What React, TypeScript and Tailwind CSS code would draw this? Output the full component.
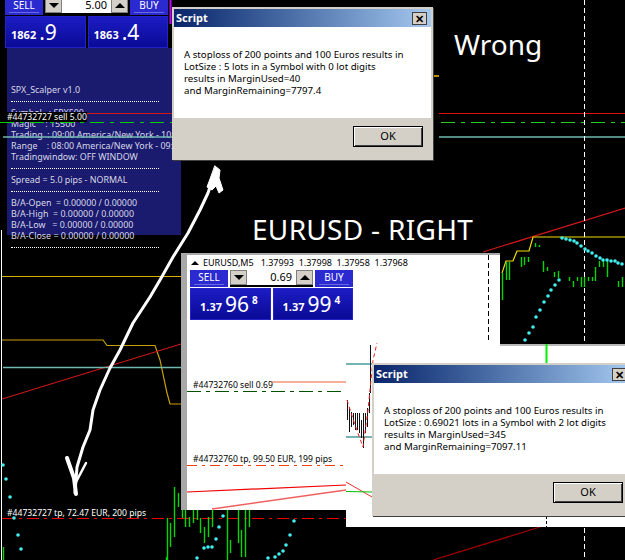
const uiFont = { fontFamily: '"Noto Sans", sans-serif' };

const candleDots = [
  [525, 340], [529, 333], [533, 327], [536, 317], [540, 310], [544, 302], [548, 296], [551, 290], [555, 285], [559, 280],
  [562, 238], [566, 239], [570, 240], [574, 241], [577, 243], [581, 246], [585, 249], [588, 251], [592, 253], [596, 256],
  [600, 258], [603, 260], [607, 260], [611, 261], [615, 261], [618, 263], [622, 264],
  [3, 465], [6, 479], [10, 497], [14, 518], [18, 535], [21, 549],
  [197, 558], [204, 548], [208, 547], [212, 547], [216, 539], [219, 527], [223, 516],
  [268, 558], [275, 557], [279, 554], [283, 551], [286, 545], [290, 535], [294, 521],
];

// x, top, bottom
const greenSticks = [
  [502, 273, 300], [506, 262, 280], [509, 262, 280], [521, 257, 267], [524, 257, 265], [528, 257, 262], [535, 243, 247],
  [539, 245, 247], [543, 261, 272], [547, 267, 271], [554, 272, 277], [558, 271, 278], [569, 277, 281], [573, 281, 287],
  [577, 277, 281], [581, 277, 287], [584, 277, 287], [588, 277, 281], [592, 277, 281], [595, 267, 281], [599, 261, 267],
  [603, 261, 267], [607, 261, 277], [618, 281, 287], [622, 277, 287],
  [3, 547, 560], [166, 557, 560], [167, 518, 560], [170, 523, 547], [174, 487, 537], [178, 493, 507],
  [182, 509, 518], [185, 509, 527], [189, 517, 527], [193, 509, 523], [197, 509, 520], [200, 518, 533], [204, 527, 543],
  [208, 517, 537], [212, 509, 527], [227, 509, 560], [230, 540, 553], [238, 509, 543], [241, 530, 557], [245, 509, 557], [249, 509, 527],
];

const blackSticks = [
  [347, 400, 420], [349, 407, 432], [351, 412, 427], [353, 413, 425], [355, 413, 430], [357, 413, 430], [359, 413, 433],
  [361, 420, 438], [363, 413, 448], [365, 413, 433], [367, 408, 427], [369, 393, 413], [370, 345, 393],
];

const infoRows = [
  'Symbol   : SPX500',
  'Magic    : 15500',
  'Trading  : 09:00 America/New York - 10:00',
  'Range    : 08:00 America/New York - 09:30',
  'Tradingwindow: OFF WINDOW',
];

const ohlcRows = [
  'B/A-Open  = 0.00000 / 0.00000',
  'B/A-High  = 0.00000 / 0.00000',
  'B/A-Low   = 0.00000 / 0.00000',
  'B/A-Close = 0.00000 / 0.00000',
];

const Dashes = () => <div className="mb-[5px] mt-1.5 w-[148px] border-t border-dotted border-white" />;

const Price = ({ big, head, tail }: { big: string; head: string; tail?: string }) => (
  <div
    className={`flex h-8 flex-1 items-center gap-[3px] border border-[#2222c8] bg-gradient-to-b from-[#1c1cc4] to-[#0a0a96] text-white ${
      tail ? 'pl-[9px]' : 'pl-[5px]'
    }`}
  >
    <span className="mt-1.5 text-[11px] font-bold">{head}</span>
    <span className="text-[21px] leading-none">{big}</span>
    {tail && <span className="-mt-2 text-[10px] font-bold">{tail}</span>}
  </div>
);

const Arrow = ({ up }: { up?: boolean }) => (
  <div className="flex w-[17px] items-center justify-center border border-[#808080] bg-[#d4d0c8]">
    <div
      className={
        up
          ? 'h-0 w-0 border-x-[5px] border-b-[5px] border-x-transparent border-b-black'
          : 'h-0 w-0 border-x-[5px] border-t-[5px] border-x-transparent border-t-black'
      }
    />
  </div>
);

const TradePanel = ({ lots, sell, buy }: { lots: string; sell: [string, string, string?]; buy: [string, string, string?] }) => (
  <div className="flex w-[163px] flex-col gap-px" style={uiFont}>
    <div className="flex h-[17px]">
      <div className="flex w-[38px] flex-col items-center justify-center bg-[#2a2ad0] text-[10px] text-white">
        <span className="leading-none">SELL</span>
        <div className="mt-0.5 h-px w-[30px] bg-[#6a6ae0]" />
      </div>
      <div className="mx-0.5 flex w-[83px] border-b-2 border-black bg-white">
        <Arrow />
        <div className="flex flex-1 items-center justify-end pr-1 text-[11px] text-black">{lots}</div>
        <Arrow up />
      </div>
      <div className="flex flex-1 flex-col items-center justify-center bg-[#2a2ad0] text-[10px] text-white">
        <span className="leading-none">BUY</span>
        <div className="mt-0.5 h-px w-[30px] bg-[#6a6ae0]" />
      </div>
    </div>
    <div className="flex gap-0.5">
      <Price head={sell[0]} big={sell[1]} tail={sell[2]} />
      <Price head={buy[0]} big={buy[1]} tail={buy[2]} />
    </div>
  </div>
);

const Dialog = ({ lines, className }: { lines: string[]; className: string }) => (
  <div
    className={`absolute flex h-[153px] w-[261px] flex-col border-2 border-[#d4d0c8] shadow-[1px_1px_0_#404040] ${className}`}
    style={uiFont}
  >
    <div className="flex h-[18px] items-center justify-between bg-gradient-to-r from-[#0a246a] to-[#a6caf0] pl-0.5 pr-1">
      <span className="text-[11px] font-bold text-white">Script</span>
      <div className="flex h-[13px] w-[15px] items-center justify-center border border-[#404040] bg-[#d4d0c8] text-[11px] font-bold leading-none text-black">
        ✕
      </div>
    </div>
    <div className="h-[91px] bg-white pl-2.5 pt-[22px] text-[9.7px] leading-[12px] text-black">
      {lines.map(line => (
        <div key={line} className="whitespace-nowrap">{line}</div>
      ))}
    </div>
    <div className="flex flex-1 items-start justify-end bg-[#d4d0c8] pr-2 pt-2">
      <div className="flex h-[21px] w-[70px] items-center justify-center border border-black text-[11px] text-black shadow-[inset_1px_1px_0_#fff,inset_-1px_-1px_0_#404040]">OK</div>
    </div>
  </div>
);

export default function App() {
  return (
    <div className="relative h-[560px] w-[625px] overflow-hidden bg-black" style={uiFont}>
      {/* terminal panel, top left */}
      <div className="absolute left-[5px] top-[-2px]">
        <TradePanel lots="5.00" sell={['1862', '.9']} buy={['1863', '.4']} />
      </div>
      <div className="absolute left-[7px] top-[48px] h-[187px] w-[174px] bg-[#1a1a6e] pl-1 pt-[36px] text-[8.9px] leading-[11px] text-[#d8d8e8]">
        <div className="whitespace-pre">SPX_Scalper v1.0</div>
        <Dashes />
        {infoRows.map(row => (
          <div key={row} className="whitespace-pre">{row}</div>
        ))}
        <Dashes />
        <div className="whitespace-pre">Spread = 5.0 pips - NORMAL</div>
        <Dashes />
        {ohlcRows.map(row => (
          <div key={row} className="whitespace-pre">{row}</div>
        ))}
        <Dashes />
      </div>

      {/* chart lines behind the windows */}
      <svg className="absolute inset-0" width="625" height="560" fill="none">
        <line x1="170.5" y1="0" x2="170.5" y2="24" stroke="#c000ff" strokeWidth="2" />
        <line x1="85" y1="113.5" x2="172" y2="113.5" stroke="#d01818" />
        <line x1="439" y1="113.5" x2="625" y2="113.5" stroke="#e01010" />
        <line x1="0" y1="122.5" x2="172" y2="122.5" stroke="#00d000" strokeDasharray="14 6 4 6" />
        <line x1="441" y1="122.5" x2="625" y2="122.5" stroke="#20d020" strokeDasharray="14 6 4 6" />
        <line x1="3" y1="137" x2="172" y2="137" stroke="#70b8b0" strokeWidth="1.5" />
        <line x1="439" y1="137" x2="625" y2="137" stroke="#70b8b0" strokeWidth="1.5" />
        <line x1="433" y1="76" x2="439" y2="76" stroke="#b89000" strokeWidth="2" />
        <line x1="2" y1="276.5" x2="181" y2="276.5" stroke="#d8b000" />
        <polyline points="2,340 103,340 107,345.5 155,345.5 160,360 167,393 170,404 181,404" stroke="#c8a000" strokeWidth="1.2" />
        <polyline points="2,399 181,344" stroke="#c81818" strokeWidth="1.3" />
        <polyline points="483,252 625,208" stroke="#c81818" strokeWidth="1.3" />
        <line x1="3" y1="367.5" x2="181" y2="367.5" stroke="#70b8b0" strokeWidth="1.5" />
        <polyline points="502,273 506,261 513,261 517,251 529,251 533,237 625,237" stroke="#f0e000" strokeWidth="1.2" />
        <line x1="584.5" y1="0" x2="584.5" y2="560" stroke="#fff" strokeDasharray="5 3" />
        <line x1="1.5" y1="230" x2="1.5" y2="560" stroke="#fff" />
        <line x1="2" y1="518.5" x2="346" y2="518.5" stroke="#f00000" strokeDasharray="12 5 3 5" />
        <line x1="433" y1="560" x2="540" y2="527" stroke="#a00000" strokeWidth="1.3" />
        {greenSticks.map(([x, y1, y2]) => (
          <line key={`${x}-${y1}`} x1={x + 0.5} y1={y1} x2={x + 0.5} y2={y2} stroke="#00d800" strokeWidth="1.4" />
        ))}
        {candleDots.map(([x, y]) => (
          <circle key={`${x}-${y}`} cx={x} cy={y} r="1.8" fill="#40f0f0" />
        ))}
      </svg>

      {/* text labels on the black chart */}
      <div className="absolute left-[7px] top-[112px] whitespace-nowrap bg-black text-[8.6px] leading-[10px] text-white">#44732727 sell 5.00</div>
      <div className="absolute left-[7px] top-[507px] whitespace-nowrap text-[8.6px] leading-[12px] text-white">#44732727 tp, 72.47 EUR, 200 pips</div>
      <div className="absolute left-[454px] top-[27px] text-[28px] leading-[34px] text-white">Wrong</div>
      <div className="absolute left-[252px] top-[212px] text-[28px] leading-[34px] tracking-[0.3px] text-white">EURUSD - RIGHT</div>

      {/* EURUSD chart window */}
      <div className="absolute left-[346px] top-[344px] h-[183px] w-[279px] bg-white" />
      <div className="absolute left-[500px] top-[344px] h-0.5 w-[125px] bg-[#b8b8b8]" />
      <div className="absolute left-[181px] top-[253px] h-[257px] w-[319px] border-l-[6px] border-t-2 border-[#a8a8a8] bg-white pl-[3px]">
        <div className="flex h-[15px] items-center gap-1 pl-px text-[9px] leading-none text-black">
          <div className="h-0 w-0 border-x-[4px] border-b-[4px] border-x-transparent border-b-black" />
          <span className="whitespace-pre">EURUSD,M5   1.37993  1.37998  1.37958  1.37968</span>
        </div>
        <TradePanel lots="0.69" sell={['1.37', '96', '8']} buy={['1.37', '99', '4']} />
        <div className="mt-[59px] whitespace-nowrap pl-[3px] text-[8.6px] leading-[12px] text-black">#44732760 sell 0.69</div>
        <div className="mt-[62px] whitespace-nowrap pl-[3px] text-[8.6px] leading-[12px] text-black">#44732760 tp, 99.50 EUR, 199 pips</div>
      </div>

      {/* lines drawn inside the chart window */}
      <svg className="absolute inset-0" width="625" height="560" fill="none">
        <line x1="272" y1="382" x2="346" y2="382" stroke="#f06030" strokeWidth="1.2" />
        <line x1="187" y1="391.5" x2="346" y2="391.5" stroke="#005000" strokeDasharray="14 5 4 5" />
        <line x1="187" y1="465.5" x2="346" y2="465.5" stroke="#f04010" strokeDasharray="10 5 3 5" />
        <polyline points="187,492 346,485" stroke="#f00000" strokeWidth="1.2" />
        <polyline points="212,509 346,490" stroke="#f06060" strokeWidth="1.5" />
        <polyline points="346,482 372,497" stroke="#f03030" />
        <line x1="346" y1="491.5" x2="372" y2="492" stroke="#00c000" />
        <line x1="346" y1="364" x2="372" y2="364" stroke="#4a9a98" strokeWidth="1.5" />
        <line x1="346" y1="437" x2="372" y2="437" stroke="#4a9a98" strokeWidth="1.5" />
        {blackSticks.map(([x, y1, y2]) => (
          <line key={`${x}-${y1}`} x1={x + 0.5} y1={y1} x2={x + 0.5} y2={y2} stroke="#101010" />
        ))}
        <polyline points="347,400 355,425 363,447 368,410 373,360 377,343" stroke="#f02020" strokeDasharray="4 3" />
        <line x1="488.5" y1="255" x2="488.5" y2="343" stroke="#000" strokeDasharray="5 3" />
        <line x1="546.5" y1="344" x2="546.5" y2="363" stroke="#00f000" strokeWidth="2" />
        <line x1="546.5" y1="516" x2="546.5" y2="527" stroke="#000" strokeDasharray="3 2" />
      </svg>

      <Dialog
        className="left-[172px] top-[7px]"
        lines={[
          'A stoploss of 200 points and 100 Euros results in',
          'LotSize : 5 lots in a Symbol with 0 lot digits',
          'results in MarginUsed=40',
          'and MarginRemaining=7797.4',
        ]}
      />
      <Dialog
        className="left-[372px] top-[363px]"
        lines={[
          'A stoploss of 200 points and 100 Euros results in',
          'LotSize : 0.69021 lots in a Symbol with 2 lot digits',
          'results in MarginUsed=345',
          'and MarginRemaining=7097.11',
        ]}
      />

      {/* hand drawn arrow */}
      <svg className="absolute inset-0" width="625" height="560" fill="none" stroke="#fff" strokeLinecap="round" strokeLinejoin="round">
        <polyline strokeWidth="3" points="215,172 208,193 200,210 188,233 173,257 160,280 150,297 133,323 120,350 110,368 100,390 93,410 90,430 83,447 77,467 75,493" />
        <polygon fill="#fff" strokeWidth="1" points="215,166 220,170 219,178 223,190 219,193 216,186 212,190 207,187 210,179" />
        <polyline strokeWidth="4" points="67,458 74,478 76,494" />
        <polyline strokeWidth="2.5" points="86,463 76,482" />
      </svg>
    </div>
  );
}
